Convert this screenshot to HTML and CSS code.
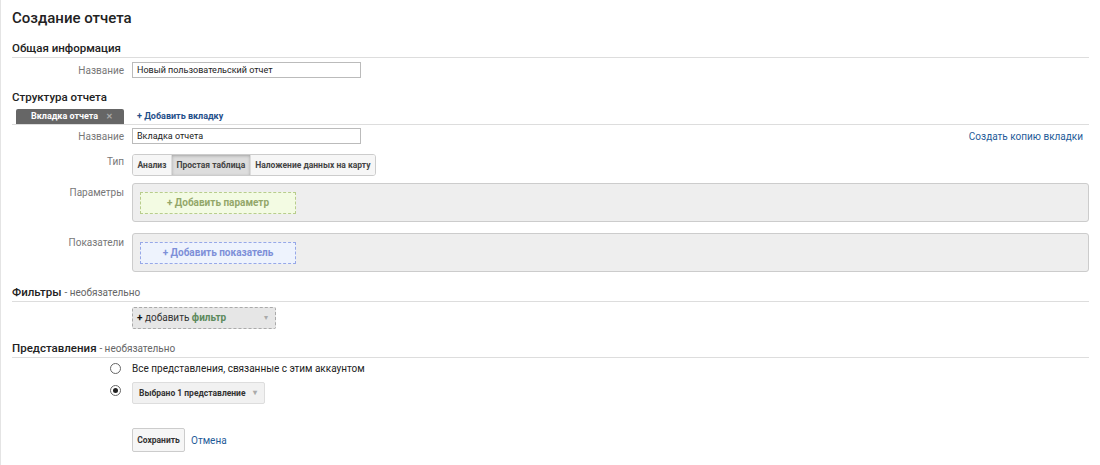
FILE: index.html
```html
<!DOCTYPE html>
<html>
  <head>
    <title>Создание отчета</title>
    <link rel="stylesheet" href="styles.css">
  </head>
  <body>
    <div class="page">
      <h1>Создание отчета</h1>

      <h2 class="section">Общая информация</h2>
      <div class="row first">
        <label class="label">Название</label>
        <input class="text" type="text" value="Новый пользовательский отчет" />
      </div>

      <h2 class="section plain">Структура отчета</h2>
      <div class="tabs">
        <span class="tab">Вкладка отчета <span class="close">&#x2715;</span></span>
        <a class="add-tab">+ Добавить вкладку</a>
      </div>
      <div class="row tab-name">
        <label class="label">Название</label>
        <input class="text" type="text" value="Вкладка отчета" />
        <a class="copy">Создать копию вкладки</a>
      </div>
      <div class="row type-row">
        <label class="label">Тип</label>
        <div class="toggle">
          <button>Анализ</button>
          <button class="on">Простая таблица</button>
          <button>Наложение данных на карту</button>
        </div>
      </div>
      <div class="row box-row params">
        <label class="label">Параметры</label>
        <div class="box">
          <div class="drop dims">+ Добавить параметр</div>
        </div>
      </div>
      <div class="row box-row metrics">
        <label class="label">Показатели</label>
        <div class="box">
          <div class="drop mets">+ Добавить показатель</div>
        </div>
      </div>

      <h2 class="section filters">Фильтры <span class="opt">- необязательно</span></h2>
      <div class="row filter-row">
        <span class="label"></span>
        <div class="filter"><b>+</b> добавить <span class="green">фильтр</span><span class="arrow">&#9662;</span></div>
      </div>

      <h2 class="section views">Представления <span class="opt">- необязательно</span></h2>
      <div class="row radio-row">
        <span class="label"><span class="radio"></span></span>
        <span class="radio-text">Все представления, связанные с этим аккаунтом</span>
      </div>
      <div class="row radio-row second">
        <span class="label"><span class="radio checked"></span></span>
        <div class="select">Выбрано 1 представление<span class="arrow">&#9662;</span></div>
      </div>

      <div class="row actions">
        <span class="label"></span>
        <button class="save">Сохранить</button>
        <a class="cancel">Отмена</a>
      </div>
    </div>
  </body>
</html>
```

FILE: styles.css
```css
body {
  margin: 0;
  font-family: Roboto, Arial, sans-serif;
  font-size: 11px;
  color: #222;
  background: #fff;
}
.page {
  border-left: 1px solid #e4e4e4;
  padding: 8px 11px 0 11px;
  height: 457px;
}
h1 {
  margin: 0;
  font-size: 15px;
  line-height: 20px;
  font-weight: 500;
  color: #222;
}
.section {
  margin: 13px 0 0 0;
  font-size: 11.5px;
  line-height: 15px;
  font-weight: 500;
  color: #222;
  padding-bottom: 1px;
  border-bottom: 1px solid #ddd;
}
.section.plain {
  border-bottom: none;
  padding-bottom: 0;
  margin-top: 12px;
}
.section.filters {
  margin-top: 13px;
  padding-bottom: 1px;
}
.section.views {
  margin-top: 12px;
  padding-bottom: 1px;
}
.opt {
  font-size: 10px;
  font-weight: normal;
  color: #666;
}
.row {
  display: flex;
  align-items: center;
}
.label {
  width: 112px;
  flex: none;
  text-align: right;
  padding-right: 8px;
  color: #777;
  font-size: 10px;
}
.row.first {
  margin-top: 4px;
}
.text {
  width: 229px;
  height: 16px;
  box-sizing: border-box;
  border: 1px solid #bbb;
  padding: 0 4px;
  font-family: Roboto, Arial, sans-serif;
  font-size: 9px;
  color: #222;
  margin: 0;
}
.tabs {
  margin-top: 4px;
  display: flex;
  align-items: stretch;
  border-bottom: 1px solid #ddd;
  height: 15px;
}
.tab {
  margin-left: 4px;
  width: 108px;
  box-sizing: border-box;
  background: #666;
  color: #fff;
  font-size: 9px;
  font-weight: bold;
  line-height: 15px;
  padding-left: 15px;
  border-radius: 2px 2px 0 0;
}
.close {
  color: #aaa;
  font-size: 8px;
  font-weight: bold;
  margin-left: 6px;
}
.add-tab {
  margin-left: 13px;
  color: #1f4f8a;
  font-size: 9px;
  font-weight: bold;
  line-height: 15px;
}
.row.tab-name {
  margin-top: 3px;
  height: 16px;
}
.copy {
  margin-left: auto;
  margin-right: 6px;
  align-self: flex-start;
  margin-top: 3px;
  color: #1f5c99;
  font-size: 10px;
}
.row.type-row {
  margin-top: 10px;
  align-items: flex-start;
}
.type-row .label {
  line-height: 16px;
}
.toggle {
  display: flex;
  border: 1px solid #ccc;
  border-radius: 3px;
  overflow: hidden;
  height: 22px;
  box-sizing: border-box;
}
.toggle button {
  border: none;
  border-left: 1px solid #ddd;
  background: #f6f6f6;
  font-family: Roboto, Arial, sans-serif;
  font-size: 8.5px;
  font-weight: bold;
  color: #444;
  padding: 0 4.5px;
  margin: 0;
}
.toggle button:first-child {
  border-left: none;
}
.toggle button.on {
  background: #ddd;
  box-shadow: inset 0 1px 3px rgba(0, 0, 0, 0.25);
}
.row.box-row {
  align-items: flex-start;
}
.row.params {
  margin-top: 7px;
}
.row.metrics {
  margin-top: 11px;
}
.box-row .label {
  padding-top: 4px;
}
.box {
  flex: 1;
  height: 39px;
  box-sizing: border-box;
  background: #eee;
  border: 1px solid #ccc;
  border-radius: 3px;
  padding: 8px 0 0 7px;
}
.drop {
  width: 156px;
  height: 22px;
  box-sizing: border-box;
  text-align: center;
  line-height: 20px;
  font-size: 10px;
  font-weight: bold;
}
.drop.dims {
  background: #f3fbe3;
  border: 1px dashed #b8cd8d;
  color: #93a76a;
}
.drop.mets {
  background: #eef3fd;
  border: 1px dashed #97a8e8;
  color: #7d8fd8;
}
.row.filter-row {
  margin-top: 5px;
}
.filter {
  position: relative;
  width: 144px;
  height: 22px;
  box-sizing: border-box;
  background: #e6e6e6;
  border: 1px dashed #aaa;
  border-radius: 2px;
  padding-left: 4px;
  line-height: 20px;
  font-size: 10px;
  color: #333;
}
.filter b {
  color: #111;
}
.green {
  color: #5d8a5d;
  font-weight: bold;
}
.arrow {
  position: absolute;
  right: 7px;
  top: 0;
  color: #aaa;
  font-size: 8px;
}
.row.radio-row {
  margin-top: 4px;
  height: 13px;
}
.row.radio-row.second {
  margin-top: 7px;
  height: 22px;
  align-items: flex-start;
}
.radio-row .label {
  display: flex;
  justify-content: flex-end;
  padding-right: 11px;
  width: 109px;
}
.second .label {
  padding-top: 3px;
}
.radio {
  width: 9px;
  height: 9px;
  border: 1px solid #666;
  border-radius: 50%;
  position: relative;
  background: #fff;
}
.radio.checked::after {
  content: "";
  position: absolute;
  left: 2px;
  top: 2px;
  width: 5px;
  height: 5px;
  border-radius: 50%;
  background: #222;
}
.radio-text {
  font-size: 10px;
  color: #222;
}
.select {
  position: relative;
  width: 133px;
  height: 22px;
  box-sizing: border-box;
  background: #f1f1f1;
  border: 1px solid #ddd;
  border-radius: 2px;
  padding-left: 6px;
  line-height: 20px;
  font-size: 8.5px;
  font-weight: bold;
  color: #333;
}
.row.actions {
  margin-top: 24px;
}
.save {
  height: 24px;
  width: 53px;
  padding: 0;
  border: 1px solid #ccc;
  border-radius: 2px;
  background: #f6f6f6;
  font-family: Roboto, Arial, sans-serif;
  font-size: 8.5px;
  font-weight: bold;
  color: #333;
}
.cancel {
  margin-left: 6px;
  color: #1f5c99;
  font-size: 10px;
}
```
